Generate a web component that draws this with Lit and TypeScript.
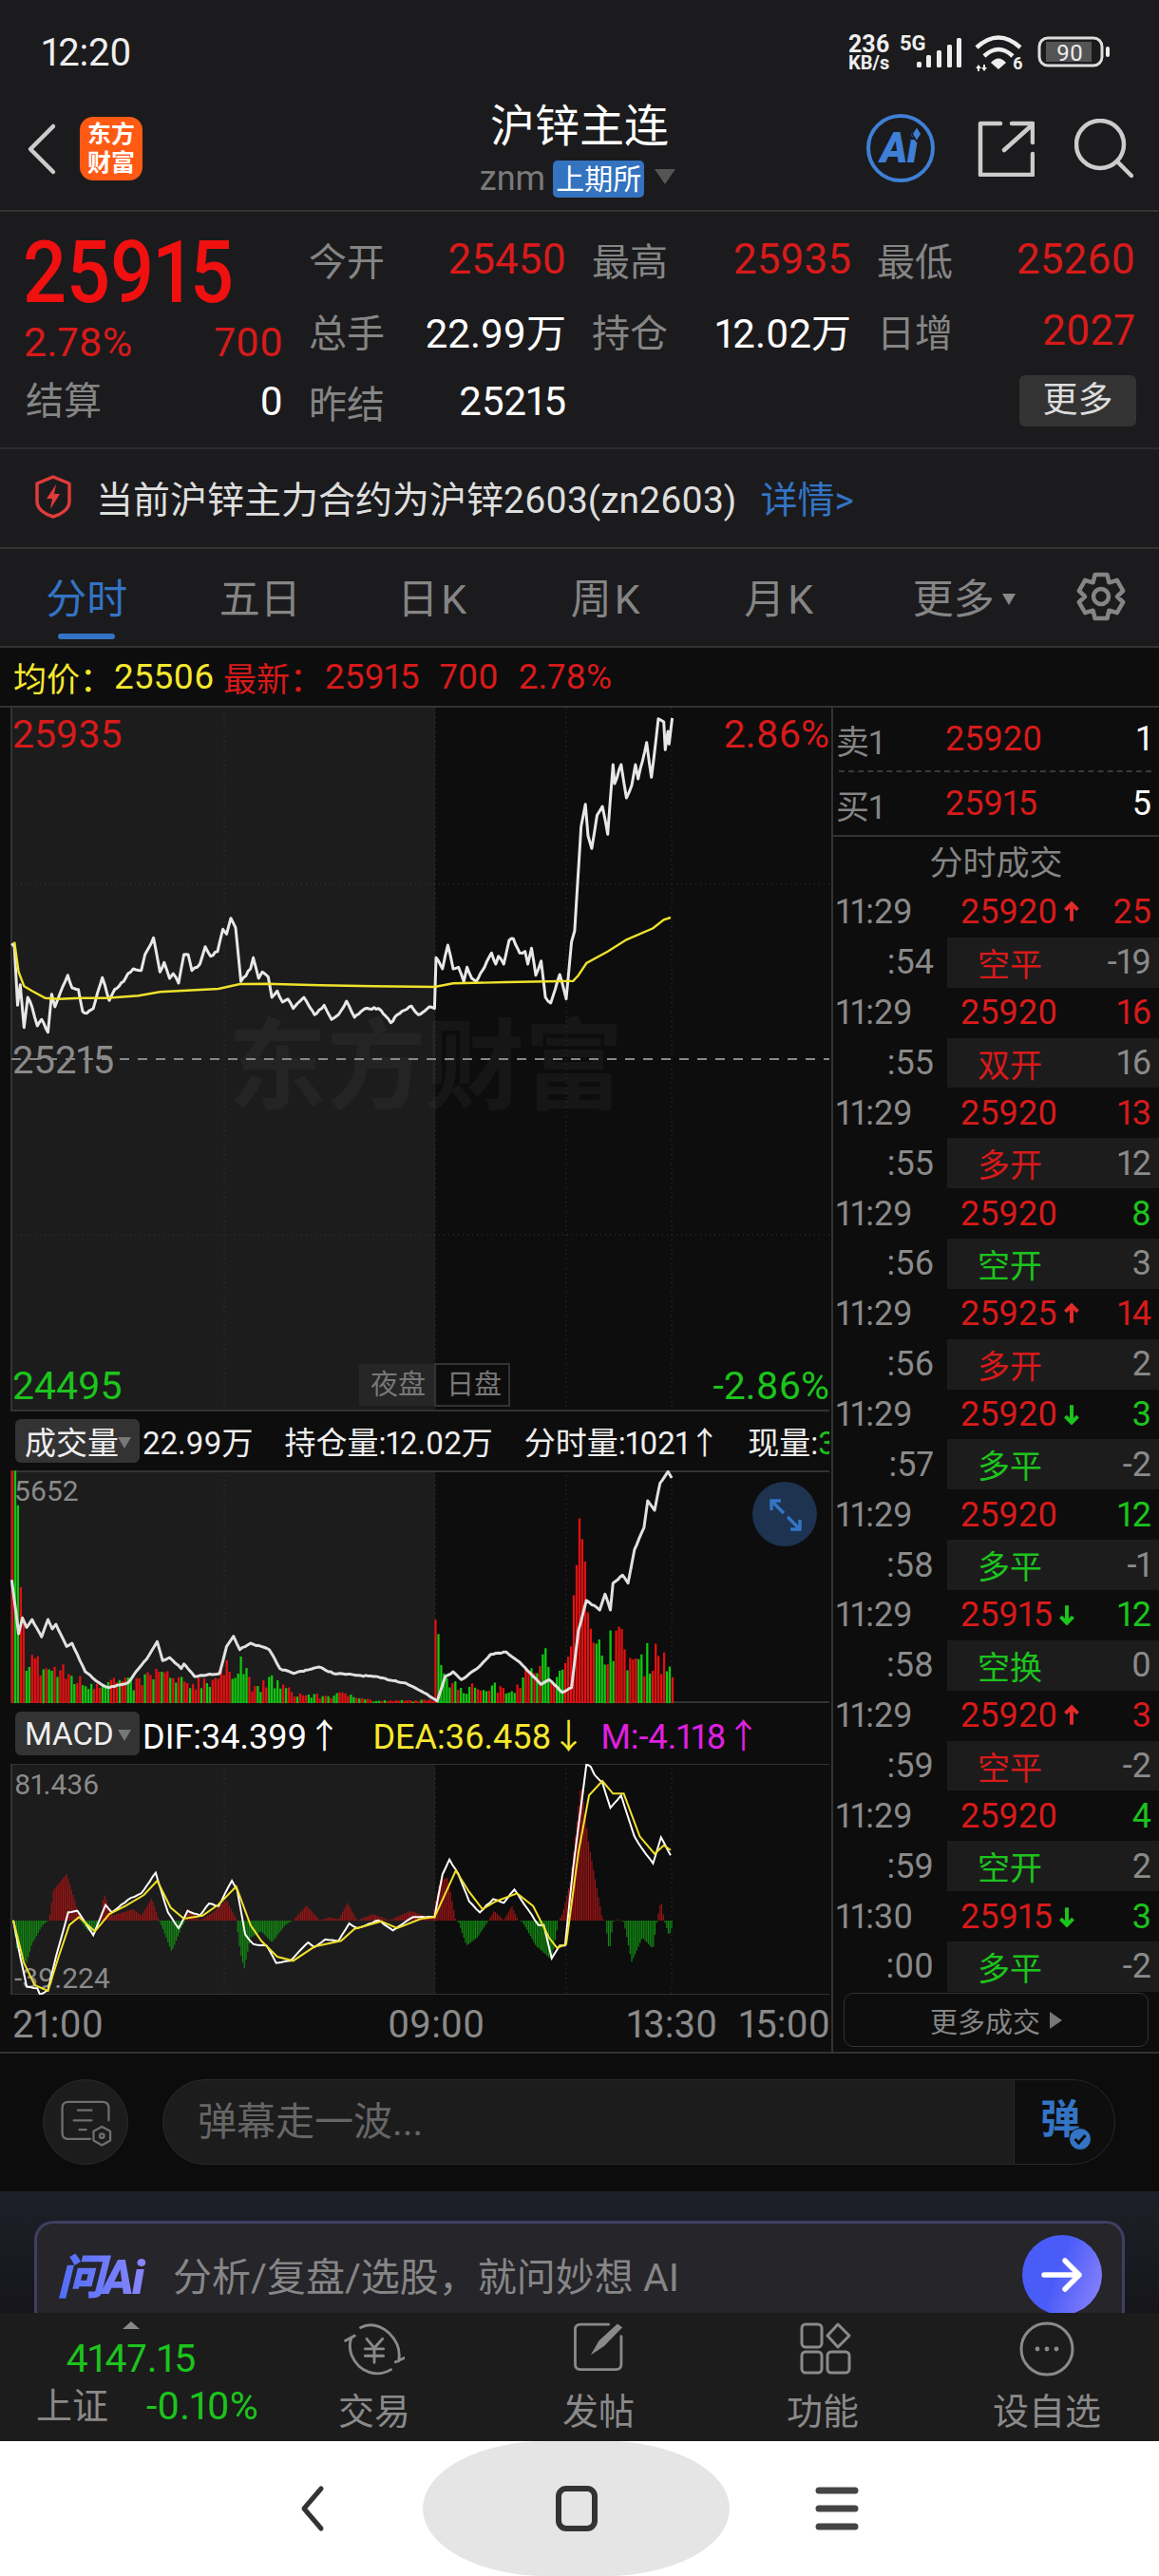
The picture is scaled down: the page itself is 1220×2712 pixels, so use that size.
import { LitElement, html, css, svg } from "lit";
import { customElement } from "lit/decorators.js";

type P = [number, number];
const XS = 1.782;
let seed = 7;
const rnd = () => {
  seed = (seed * 16807) % 2147483647;
  return seed / 2147483647;
};
const pairs = (s: string): P[] =>
  s.trim().split(/\s+/).map((t) => t.split(",").map(Number) as P);

const mapPts = (pts: P[], y0: number): P[] => pts.map(([x, y]) => [x / XS, y0 + y / 3]);
const jitter = (pts: P[], step: number, amp: number): P[] => {
  const out: P[] = [];
  for (let i = 0; i < pts.length - 1; i++) {
    const [a, b] = pts[i];
    const [c, d] = pts[i + 1];
    const n = Math.max(1, Math.floor((c - a) / step));
    for (let k = 0; k < n; k++) {
      const t = k / n;
      out.push([a + (c - a) * t, b + (d - b) * t + (k ? (rnd() - 0.5) * amp : 0)]);
    }
  }
  out.push(pts[pts.length - 1]);
  return out;
};
const line = (pts: P[]) => pts.map(([x, y]) => `${x.toFixed(1)},${y.toFixed(1)}`).join(" ");
const interp = (pts: P[], x: number) => {
  if (x <= pts[0][0]) return pts[0][1];
  for (let i = 0; i < pts.length - 1; i++) {
    if (x <= pts[i + 1][0]) {
      const t = (x - pts[i][0]) / (pts[i + 1][0] - pts[i][0]);
      return pts[i][1] + (pts[i + 1][1] - pts[i][1]) * t;
    }
  }
  return pts[pts.length - 1][1];
};

const priceRaw = pairs(`22,760 27,770 33,955 38,890 45,1025 52,930 60,960 70,1020 78,1000 90,1040 97,920 103,960 118,895 127,860 135,900 147,905 155,975 163,980 175,965 183,915 192,868 205,940 215,905 232,880 240,855 250,840 265,845 272,795 288,742 300,850 308,820 318,870 325,855 335,885 345,795 353,795 360,845 375,825 385,770 395,800 408,785 418,715 425,730 433,680 442,710 452,880 470,840 475,805 485,870 492,850 503,865 510,930 520,910 530,945 540,935 550,965 570,930 590,985 608,955 622,1000 635,985 650,942 665,993 685,965 710,965 733,1010 745,985 772,958 785,985 805,960 815,965 818,805 830,840 840,765 850,840 860,835 870,880 876,835 885,870 893,880 905,845 922,790 930,825 935,800 945,825 955,750 963,745 975,790 985,785 990,825 997,775 1005,860 1015,815 1023,930 1033,948 1050,858 1062,935 1072,755 1078,720 1090,390 1098,320 1103,420 1110,460 1120,355 1130,327 1140,415 1150,195 1153,255 1165,195 1175,300 1185,260 1192,195 1197,240 1213,125 1222,235 1235,50 1245,60 1248,148 1253,90 1255,130 1261,48`);
const avgRaw = pairs(`27,755 35,850 45,895 60,910 85,932 110,935 150,932 200,932 260,925 300,913 410,903 450,888 500,887 600,892 700,895 815,897 850,886 950,882 1075,878 1085,860 1100,822 1140,785 1175,748 1225,712 1245,685 1258,678`);
const volLineRaw = pairs(`22,670 35,840 42,790 50,820 60,795 78,850 90,795 98,825 105,810 125,880 135,870 160,960 190,1000 205,1010 240,995 260,950 275,920 295,865 305,925 318,915 340,950 345,935 365,975 412,965 425,880 438,848 450,890 470,870 505,890 525,950 550,965 598,945 625,965 700,975 760,995 800,1030 820,1052 835,975 850,960 865,985 895,950 920,905 950,898 975,930 1015,1000 1030,985 1055,1025 1072,1010 1085,830 1100,735 1125,765 1135,715 1145,765 1150,680 1168,655 1178,680 1190,575 1208,505 1215,420 1228,450 1238,365 1253,328 1260,348`);
const volEnv = pairs(`22,325 30,325 36,500 40,700 50,850 60,860 70,900 100,920 130,940 160,980 195,960 250,980 295,930 345,980 415,945 450,870 460,920 480,1010 510,960 550,1020 600,1030 660,1020 700,1050 800,1048 815,1045 818,680 825,870 840,940 860,1000 920,990 960,1000 1005,910 1022,855 1040,990 1065,870 1080,670 1087,475 1097,600 1105,780 1120,860 1150,765 1170,830 1200,900 1232,825 1245,885 1260,925`);
const difRaw = pairs(`25,665 38,780 50,875 70,880 75,900 90,885 105,780 128,640 145,635 175,712 198,617 210,640 240,600 265,580 292,515 315,640 335,690 352,635 375,650 392,612 410,620 435,540 445,570 460,710 475,740 500,745 518,800 545,793 578,735 590,750 610,725 635,730 655,675 670,690 710,665 737,697 775,655 815,655 830,520 843,473 860,520 880,605 900,640 925,598 945,610 965,568 990,630 1010,680 1020,680 1035,785 1050,745 1060,745 1075,500 1100,172 1108,180 1115,205 1130,230 1145,310 1165,270 1190,400 1205,440 1225,485 1240,403 1258,460`);
const deaRaw = pairs(`25,665 45,800 65,870 90,888 110,780 130,680 148,655 178,700 205,645 235,620 270,585 295,540 320,625 345,660 380,650 410,615 443,558 470,680 490,730 520,780 550,793 590,748 640,730 665,692 715,668 745,690 790,660 815,655 855,508 880,575 905,630 930,605 970,580 1000,620 1030,720 1045,752 1062,740 1085,450 1105,270 1130,225 1150,265 1170,265 1200,400 1228,455 1245,428 1258,443`);
const histEnv = pairs(`25,665 30,750 50,800 60,740 80,680 92,665 100,570 125,518 140,600 150,665 165,700 180,700 188,665 195,580 210,650 250,630 265,650 285,595 298,665 305,690 322,765 340,690 350,660 355,630 375,665 400,640 425,600 443,660 450,760 458,820 470,720 490,700 510,735 535,680 550,665 575,618 600,665 620,655 635,662 652,610 670,665 700,645 730,665 770,635 810,660 825,540 840,530 855,665 860,670 875,745 895,720 915,670 927,635 945,665 960,620 972,665 980,670 1005,745 1035,790 1048,665 1055,645 1070,540 1090,230 1105,430 1130,660 1135,665 1143,768 1150,670 1160,662 1170,670 1185,797 1205,720 1225,755 1232,670 1240,600 1246,665 1255,715 1260,690`);

const pricePts = line(jitter(mapPts(priceRaw, 740), 2.2, 2.2));
const avgPts = line(mapPts(avgRaw, 740));
const volLinePts = line(jitter(mapPts(volLineRaw, 1440), 2.5, 1.2));
const difPts = line(jitter(mapPts(difRaw, 1800), 3, 1));
const deaPts = line(mapPts(deaRaw, 1800));

const buildVol = () => {
  let red = "";
  let green = "";
  const base = 1793;
  for (let x = 13; x <= 708; x += 2.97) {
    const zx = x * XS;
    const envTop = 1440 + interp(volEnv, zx) / 3;
    const full = base - envTop;
    const spike = zx < 36 || (zx > 812 && zx < 822) || (zx > 1076 && zx < 1100);
    const h = full * (spike ? 1 : 0.45 + 0.55 * rnd());
    let isRed = rnd() > 0.42;
    if (zx < 34) isRed = zx < 28;
    if (zx > 28 && zx < 36) isRed = false;
    if (zx > 812 && zx < 822) isRed = true;
    if (zx > 1060 && zx < 1100) isRed = true;
    if (zx > 440 && zx < 456) isRed = false;
    if (zx > 500 && zx < 520) isRed = false;
    if (zx > 1015 && zx < 1030) isRed = false;
    const seg = `M${x.toFixed(1)} ${base}V${(base - h).toFixed(1)}`;
    if (isRed) red += seg;
    else green += seg;
  }
  return { red, green };
};
const buildHist = () => {
  let red = "";
  let green = "";
  const zero = 2022;
  for (let x = 14; x <= 707; x += 1.75) {
    const y = 1800 + interp(histEnv, x * XS) / 3;
    const seg = `M${x.toFixed(1)} ${zero}V${y.toFixed(1)}`;
    if (y < zero) red += seg;
    else green += seg;
  }
  return { red, green };
};
const vol = buildVol();
const hist = buildHist();

const gearPath = (() => {
  const cx = 26, cy = 26;
  const teeth = 6;
  const pts: string[] = [];
  for (let i = 0; i < teeth; i++) {
    const a = (i * 2 * Math.PI) / teeth - Math.PI / 2;
    const w = 0.27;
    const seq: [number, number][] = [
      [17, a - 0.52 + 0.0],
      [24, a - w],
      [24, a + w],
      [17, a + 0.52],
    ];
    seq.forEach(([r, t]) => pts.push(`${(cx + r * Math.cos(t)).toFixed(1)} ${(cy + r * Math.sin(t)).toFixed(1)}`));
  }
  return "M" + pts.join("L") + "Z";
})();

type Trade = { t: string; p: string; a: "" | "u" | "d"; v: string; vc: string; s: string; l: string; lc: string; d: string };
const T = (t: string, p: string, a: "" | "u" | "d", v: string, vc: string, s: string, l: string, lc: string, d: string): Trade => ({ t, p, a, v, vc, s, l, lc, d });
const trades: Trade[] = [
  T("11:29", "25920", "u", "25", "r", ":54", "空平", "r", "-19"),
  T("11:29", "25920", "", "16", "r", ":55", "双开", "r", "16"),
  T("11:29", "25920", "", "13", "r", ":55", "多开", "r", "12"),
  T("11:29", "25920", "", "8", "g", ":56", "空开", "g", "3"),
  T("11:29", "25925", "u", "14", "r", ":56", "多开", "r", "2"),
  T("11:29", "25920", "d", "3", "g", ":57", "多平", "g", "-2"),
  T("11:29", "25920", "", "12", "g", ":58", "多平", "g", "-1"),
  T("11:29", "25915", "d", "12", "g", ":58", "空换", "g", "0"),
  T("11:29", "25920", "u", "3", "r", ":59", "空平", "r", "-2"),
  T("11:29", "25920", "", "4", "g", ":59", "空开", "g", "2"),
  T("11:30", "25915", "d", "3", "g", ":00", "多平", "g", "-2"),
];

const arrow = (dir: "u" | "d") =>
  dir === "u"
    ? html`<svg class="mini" viewBox="0 0 16 22"><path class="ar-r" d="M8 20V3M2 9l6-6 6 6"/></svg>`
    : html`<svg class="mini" viewBox="0 0 16 22"><path class="ar-g" d="M8 2v17M2 13l6 6 6-6"/></svg>`;

@customElement("app-root")
export class AppRoot extends LitElement {
  static styles = css`
    :host { display: block; width: 1220px; height: 2712px; background: #1b1b1d; overflow: hidden;
      font-family: Roboto, "Noto Sans CJK SC", sans-serif; color: #fff; font-variant-numeric: proportional-nums; }
    .page { display: flex; flex-direction: column; height: 2712px; }
    .r { color: #d81a1a; } .g { color: #1cc41c; } .w { color: #fff; } .gy { color: #8a8a8a; } .y { color: #f5e82e; } .m { color: #e020e0; }

    .status { height: 100px; display: flex; align-items: center; justify-content: space-between; flex: none; }
    .time { font-size: 40px; margin-left: 44px; margin-top: 10px; color: #eee; letter-spacing: -0.2px; }
    .st-svg { width: 300px; height: 50px; margin-right: 40px; margin-top: 10px; display: block; }
    .st-t { fill: #eee; font-weight: 700; }
    .bar { fill: #eee; }
    .wf { fill: none; stroke: #eee; stroke-width: 4.5; }
    .wff { fill: #eee; }
    .bat { fill: none; stroke: #ddd; stroke-width: 3; }
    .batf { fill: #555; }
    .batn { fill: #eee; font-size: 24px; text-anchor: middle; }

    .nav { height: 121px; flex: none; display: grid; grid-template-columns: 1fr auto 1fr; border-bottom: 2px solid #333; box-sizing: content-box; }
    .nav-l { display: flex; align-items: center; gap: 24px; padding-left: 26px; padding-bottom: 8px; }
    .back { width: 34px; height: 56px; }
    .stk { fill: none; stroke: #ccc; stroke-width: 4.5; stroke-linecap: round; stroke-linejoin: round; }
    .logo { width: 66px; height: 67px; background: #ff5a14; border-radius: 14px; display: flex; flex-direction: column; align-items: center; justify-content: center; font-size: 25px; line-height: 30px; color: #fff; font-weight: 700; }
    .nav-c { display: flex; flex-direction: column; align-items: center; padding-top: 5px; }
    .title { font-size: 47px; line-height: 56px; color: #fff; }
    .sub { display: flex; align-items: center; margin-top: 7px; height: 40px; }
    .znm { font-size: 36px; color: #7a7a7a; margin-right: 8px; margin-left: -4px; }
    .badge { background: #3373c0; border-radius: 5px; height: 39px; width: 96px; font-size: 30px; line-height: 39px; text-align: center; color: #fff; }
    .tri-d { width: 0; height: 0; border-left: 11px solid transparent; border-right: 11px solid transparent; border-top: 16px solid #555; margin-left: 11px; margin-top: -4px; }
    .nav-r { display: flex; justify-content: flex-end; align-items: center; padding-right: 27px; padding-bottom: 10px; gap: 42px; }
    .ai-i { width: 74px; height: 74px; margin-right: 2px; }
    .ai-c { fill: none; stroke: #3f7fd6; stroke-width: 4; }
    .ai-t { fill: #3f7fd6; font-size: 44px; font-weight: 900; font-style: italic; text-anchor: middle; letter-spacing: -1px; }
    .ai-s { fill: #3f7fd6; stroke: #1b1b1d; stroke-width: 1.5; }
    .sh-i { width: 60px; height: 60px; }
    .se-i { width: 62px; height: 62px; }

    .quote { height: 248px; flex: none; display: grid; grid-template-columns: 325px 298px 300px 272px; border-bottom: 2px solid #2c2c2e; box-sizing: content-box; }
    .q-left { display: flex; flex-direction: column; padding: 30px 27px 0 27px; box-sizing: border-box; }
    .big { font-size: 90px; font-weight: 500; line-height: 70px; color: #f01010; height: 70px; margin-left: -3px; transform: scaleX(0.9); transform-origin: left center; white-space: nowrap; }
    .q-sub { display: flex; justify-content: space-between; height: 70px; margin-top: 2px; line-height: 70px; font-size: 43px; margin-left: -2px; }
    .q-row { display: flex; justify-content: space-between; height: 56px; line-height: 56px; align-items: center; }
    .cell { display: flex; justify-content: space-between; align-items: center; height: 75px; padding-right: 27px; box-sizing: border-box; }
    .cell.last { padding-right: 0; }
    .q-grid { grid-column: 2 / 5; display: grid; grid-template-columns: 298px 300px 272px; grid-auto-rows: 75px; padding-top: 12px; }
    .lb { font-size: 40px; color: #858585; }
    .val { font-size: 44px; letter-spacing: 0; }
    .val.tight { font-size: 42px; }
    .more { width: 123px; height: 54px; background: #333; border-radius: 6px; font-size: 37px; line-height: 54px; text-align: center; color: #ddd; margin-left: 150px; margin-top: 10px; }

    .notice { flex: none; display: flex; align-items: center; border-bottom: 2px solid #333; padding-left: 36px; padding-bottom: 4px; box-sizing: border-box; height: 105px; }
    .shield { width: 40px; height: 46px; margin-right: 25px; }
    .sh-s { fill: none; stroke: #e23b3b; stroke-width: 3.5; stroke-linejoin: round; }
    .sh-f { fill: #e23b3b; }
    .n-txt { font-size: 39px; color: #dedede; }
    .n-link { font-size: 39px; color: #3374c4; margin-left: 25px; }

    .tabs { height: 102px; flex: none; display: grid; grid-template-columns: repeat(6, 182.5px) 1fr; border-bottom: 2px solid #333; background: #1b1b1d; box-sizing: content-box; }
    .tab { display: flex; flex-direction: column; align-items: center; padding-top: 27px; font-size: 43px; line-height: 52px; color: #858585; }
    .tab.on { color: #3374c4; }
    .tab-k { letter-spacing: 3px; }
    .ul { width: 60px; height: 6px; background: #3374c4; border-radius: 3px; margin-top: 10px; }
    .tab-m { display: flex; align-items: center; }
    .tri-s { width: 0; height: 0; border-left: 7px solid transparent; border-right: 7px solid transparent; border-top: 12px solid #888; margin-left: 8px; margin-right: -22px; }
    .gear-c { display: flex; justify-content: flex-end; padding: 24px 35px 0 0; }
    .gear { width: 52px; height: 52px; }
    .gear-s { fill: none; stroke: #858585; stroke-width: 4.5; stroke-linejoin: round; }

    .info { height: 61px; flex: none; background: #0d0d0d; border-bottom: 2px solid #333; display: flex; align-items: center; padding-left: 14px; font-size: 37px; box-sizing: content-box; white-space: pre; }
    .lab1 { width: 106px; font-size: 35px; flex: none; }
    .lab2 { width: 107px; font-size: 35px; flex: none; }
    .sp { width: 10px; flex: none; }
    .sp2 { width: 21px; flex: none; }

    .main { flex: none; height: 1415px; display: flex; background: #0d0d0d; border-bottom: 2px solid #333; box-sizing: content-box; }
    .left { width: 875px; flex: none; display: flex; flex-direction: column; }
    .c-svg { display: block; width: 875px; flex: none; }
    .head { height: 62px; flex: none; display: flex; align-items: center; font-size: 33px; white-space: nowrap; overflow: hidden; width: 873px; }
    .head.mh { height: 64px; }
    .sel { width: 131px; height: 46px; background: #333; border-radius: 6px; margin-left: 16px; display: flex; align-items: center; padding-left: 10px; box-sizing: border-box; font-size: 33px; color: #eee; margin-right: 3px; flex: none; position: relative; }
    .tri-e { position: absolute; right: 9px; top: 19px; width: 0; height: 0; border-left: 7px solid transparent; border-right: 7px solid transparent; border-top: 12px solid #777; }
    .h-i { margin-right: 33px; color: #eee; flex: none; }
    .h-i.n3 { margin-right: 29px; }
    .hm { font-size: 36px; margin-right: 33px; flex: none; }
    .hm.y { margin-right: 16px; }
    .axis { height: 60px; flex: none; display: flex; align-items: center; font-size: 40px; color: #8a8a8a; padding: 2px 3px 0 13px; width: 873px; box-sizing: border-box; }
    .ax-1 { width: 395px; flex: none; } .ax-2 { width: 252px; flex: none; } .ax-3 { width: 118px; flex: none; }
    .ax-4 { flex: none; }

    .grid { stroke: #3a3a3a; stroke-width: 1; stroke-dasharray: 1 4; }
    .frame { stroke: #333; stroke-width: 2; }
    .zero { stroke: #888; stroke-width: 2; stroke-dasharray: 10 9; }
    .pl { fill: none; stroke: #e8e8e8; stroke-width: 3; stroke-linejoin: round; }
    .al { fill: none; stroke: #efe22c; stroke-width: 2.4; }
    .vl { fill: none; stroke: #e0e0e0; stroke-width: 3; stroke-linejoin: round; }
    .dif { fill: none; stroke: #fff; stroke-width: 2; }
    .dea { fill: none; stroke: #f1e02a; stroke-width: 2; }
    .vr { stroke: #e41010; stroke-width: 2.3; fill: none; }
    .vg { stroke: #10c810; stroke-width: 2.3; fill: none; }
    .hr { stroke: #9a1414; stroke-width: 1.2; fill: none; }
    .hg { stroke: #128a12; stroke-width: 1.2; fill: none; }
    .bgn { fill: #1c1c1c; } .bgd { fill: #0d0d0d; }
    .wm { fill: rgba(255,255,255,0.04); font-size: 104px; font-weight: 700; }
    .tr { fill: #d81a1a; font-size: 41px; }
    .tg { fill: #1cc41c; font-size: 41px; }
    .tgy { fill: #8a8a8a; font-size: 40px; }
    .ts { fill: #8a8a8a; font-size: 30px; }
    .end { text-anchor: end; }
    .sw-a { fill: #262626; } .sw-b { fill: #0d0d0d; stroke: #333; stroke-width: 2; }
    .sw-t { fill: #777; font-size: 29px; }
    .ex-c { fill: #1d3350; }
    .ex-a { fill: none; stroke: #3374c4; stroke-width: 3.5; }

    .right { flex: 1; border-left: 2px solid #333; display: flex; flex-direction: column; font-size: 36px; min-width: 0; }
    .bs { height: 66px; flex: none; display: grid; grid-template-columns: 115px 1fr auto; align-items: center; padding: 0 8px 0 3px; }
    .bs-l { color: #858585; font-size: 35px; }
    .dash { margin: 0 8px 0 6px; height: 0; border-top: 2px dashed #3a3a3a; flex: none; }
    .bs-title { height: 55px; flex: none; border-top: 2px solid #333; font-size: 35px; color: #858585; text-align: center; line-height: 58px; box-sizing: border-box; }
    .rows { height: 1163px; flex: none; display: flex; flex-direction: column; }
    .row { flex: 1; display: grid; grid-template-columns: 120px 1fr; align-items: stretch; min-height: 0; }
    .cl-t { color: #8a8a8a; display: flex; align-items: center; padding-left: 3px; }
    .cl-t.e { justify-content: flex-end; padding: 0 14px 0 0; }
    .cl-r { display: flex; align-items: center; justify-content: space-between; padding: 0 8px 0 14px; min-width: 0; }
    .cl-r.alt { background: #1c1c1c; padding-left: 32px; font-size: 34px; }
    .cl-r .n { color: #8a8a8a; font-size: 36px; }
    .px { display: flex; align-items: center; gap: 6px; }
    .mini { width: 18px; height: 24px; }
    .ar-r { fill: none; stroke: #e52a2a; stroke-width: 3.6; }
    .ar-g { fill: none; stroke: #1cc41c; stroke-width: 3.6; }
    .mb-w { flex: 1; display: flex; align-items: flex-start; justify-content: center; padding-top: 1px; }
    .mb { width: 321px; height: 57px; border: 1px solid #333; border-radius: 10px; box-sizing: border-box; display: flex; align-items: center; justify-content: center; font-size: 29px; color: #858585; }
    .tri-r { width: 0; height: 0; border-top: 9px solid transparent; border-bottom: 9px solid transparent; border-left: 13px solid #777; margin-left: 10px; }

    .dm { height: 145px; flex: none; background: #0c0c0c; display: flex; align-items: center; padding-left: 45px; gap: 36px; padding-bottom: 2px; box-sizing: border-box; }
    .dm-b { width: 90px; height: 90px; border-radius: 50%; background: #1c1c1c; border: 1px solid #2a2a2a; box-sizing: border-box; display: flex; align-items: center; justify-content: center; flex: none; }
    .dm-i { width: 88px; height: 88px; }
    .dm-s { fill: none; stroke: #6f6f6f; stroke-width: 7; stroke-linejoin: round; stroke-linecap: round; }
    .dm-f { width: 1003px; height: 90px; border-radius: 45px; background: #1c1c1c; border: 1px solid #2a2a2a; box-sizing: border-box; display: flex; overflow: hidden; flex: none; }
    .dm-p { flex: 1; font-size: 41px; color: #666; line-height: 88px; padding-left: 36px; }
    .dm-k { width: 105px; background: #0e0e0e; border-left: 1px solid #2a2a2a; position: relative; }
    .dm-z { font-size: 42px; font-weight: 700; color: #3374c4; position: absolute; left: 27px; top: 18px; line-height: 48px; }
    .dm-c { position: absolute; left: 57px; top: 50px; width: 24px; height: 24px; }
    .ck-b { fill: #3374c4; stroke: #0e0e0e; stroke-width: 1; }
    .ck-s { fill: none; stroke: #0e0e0e; stroke-width: 3; }

    .ask { height: 128px; flex: none; background: linear-gradient(#1f1f29, #15151b); padding: 31px 36px 0; overflow: hidden; box-sizing: border-box; }
    .card { height: 140px; background: #25252a; border: 3px solid #3f3f63; border-bottom: 0; border-radius: 20px; box-sizing: border-box; display: flex; align-items: flex-start; padding: 12px 21px 0 21px; }
    .wen { font-size: 50px; font-weight: 900; font-style: italic; background: linear-gradient(90deg, #4f6ef7, #9a8cff); -webkit-background-clip: text; background-clip: text; color: transparent; margin-top: 17px; line-height: 56px; width: 122px; flex: none; letter-spacing: -2px; white-space: nowrap; }
    .ask-t { flex: 1; font-size: 41px; color: #868686; line-height: 56px; margin-top: 17px; }
    .go { width: 84px; height: 84px; border-radius: 50%; background: linear-gradient(110deg, #4a5cf8 45%, #8f85fb); display: flex; align-items: center; justify-content: center; flex: none; }
    .go-i { width: 44px; height: 36px; }
    .go-s { fill: none; stroke: #fff; stroke-width: 5.5; stroke-linecap: round; stroke-linejoin: round; }

    .btm { height: 135px; flex: none; background: #1c1c1c; display: grid; grid-template-columns: 276px repeat(4, 236px); }
    .idx { display: flex; flex-direction: column; padding-top: 9px; align-items: center; }
    .idx-tri { width: 0; height: 0; border-left: 9px solid transparent; border-right: 9px solid transparent; border-bottom: 8px solid #888; }
    .idx-v { font-size: 41px; color: #1cc41c; line-height: 44px; margin-top: 9px; }
    .idx-r { display: flex; align-self: flex-start; margin-left: 38px; gap: 40px; line-height: 46px; margin-top: 5px; font-size: 38px; color: #8a8a8a; }
    .idx-r .g { font-size: 41px; }
    .bt { display: flex; flex-direction: column; align-items: center; padding-top: 9px; }
    .bt-i { width: 64px; height: 60px; }
    .bt-s { fill: none; stroke: #8a8a8a; stroke-width: 3; stroke-linecap: round; stroke-linejoin: round; }
    .bt-sz { stroke-width: 9; }
    .bt-f { fill: #8a8a8a; }
    .bt-l { font-size: 38px; color: #8a8a8a; line-height: 46px; margin-top: 12px; }

    .sys { height: 142px; flex: none; background: #fff; display: flex; align-items: center; padding-left: 304px; box-sizing: border-box; }
    .pill { width: 323px; height: 142px; background: #e5e5e5; border-radius: 50% / 62%; display: flex; align-items: center; justify-content: center; margin: 0 90px 0 95px; }
    .sys-i { width: 46px; height: 50px; flex: none; }
    .sys-s { fill: none; stroke: #333; stroke-width: 6; stroke-linecap: round; stroke-linejoin: round; }
    .sys-b { fill: none; stroke: #333; stroke-width: 5; stroke-linecap: round; stroke-linejoin: round; }
    .sys-l { fill: none; stroke: #444; stroke-width: 7; stroke-linecap: round; }
  `;

  private chartMain() {
    return html`<svg class="c-svg" height="741" viewBox="0 745 875 741">
      ${svg`
      <rect class="bgd" x="0" y="745" width="875" height="741"/>
      <rect class="bgn" x="12" y="745" width="446" height="741"/>
      <text class="wm" x="240" y="1160">东方财富</text>
      <line class="grid" x1="236" x2="236" y1="745" y2="1484"/>
      <line class="grid" x1="458" x2="458" y1="745" y2="1484"/>
      <line class="grid" x1="596" x2="596" y1="745" y2="1484"/>
      <line class="grid" x1="707" x2="707" y1="745" y2="1484"/>
      <line class="grid" x1="12" x2="873" y1="931" y2="931"/>
      <line class="grid" x1="12" x2="873" y1="1300" y2="1300"/>
      <line class="frame" x1="12" x2="12" y1="745" y2="1486"/>
      <line class="frame" x1="12" x2="873" y1="1485" y2="1485"/>
      <text class="tgy" x="13" y="1130">25215</text>
      <line class="zero" x1="12" x2="873" y1="1115" y2="1115"/>
      <polyline class="pl" points=${pricePts}/>
      <polyline class="al" points=${avgPts}/>
      <text class="tr" x="13" y="787">25935</text>
      <text class="tr end" x="873" y="787">2.86%</text>
      <text class="tg" x="13" y="1473">24495</text>
      <text class="tg end" x="873" y="1473">-2.86%</text>
      <rect class="sw-a" x="378" y="1436" width="80" height="44"/>
      <rect class="sw-b" x="458" y="1436" width="78" height="44"/>
      <text class="sw-t" x="390" y="1468">夜盘</text>
      <text class="sw-t" x="470" y="1468">日盘</text>
      `}
    </svg>`;
  }

  private chartVol() {
    return html`<svg class="c-svg" height="245" viewBox="0 1548 875 245">
      ${svg`
      <rect class="bgn" x="12" y="1548" width="446" height="245"/>
      <line class="grid" x1="236" x2="236" y1="1548" y2="1793"/>
      <line class="grid" x1="458" x2="458" y1="1548" y2="1793"/>
      <line class="grid" x1="596" x2="596" y1="1548" y2="1793"/>
      <line class="grid" x1="707" x2="707" y1="1548" y2="1793"/>
      <line class="frame" x1="12" x2="873" y1="1549" y2="1549"/>
      <line class="frame" x1="12" x2="12" y1="1548" y2="1793"/>
      <line class="frame" x1="12" x2="873" y1="1792" y2="1792"/>
      <path class="vg" d=${vol.green}/>
      <path class="vr" d=${vol.red}/>
      <text class="ts" x="15" y="1580">5652</text>
      <polyline class="vl" points=${volLinePts}/>
      <circle class="ex-c" cx="826" cy="1594" r="34"/>
      <path class="ex-a" d="M812 1590V1580H822M812 1580L825 1593M842 1600V1610H832M842 1610L829 1597"/>
      `}
    </svg>`;
  }

  private chartMacd() {
    return html`<svg class="c-svg" height="243" viewBox="0 1857 875 243">
      ${svg`
      <rect class="bgn" x="12" y="1857" width="446" height="243"/>
      <line class="grid" x1="236" x2="236" y1="1857" y2="2100"/>
      <line class="grid" x1="458" x2="458" y1="1857" y2="2100"/>
      <line class="grid" x1="596" x2="596" y1="1857" y2="2100"/>
      <line class="grid" x1="707" x2="707" y1="1857" y2="2100"/>
      <line class="frame" x1="12" x2="873" y1="1857" y2="1857"/>
      <line class="frame" x1="12" x2="12" y1="1857" y2="2100"/>
      <line class="frame" x1="12" x2="873" y1="2100" y2="2100"/>
      <text class="ts" x="15" y="1889">81.436</text>
      <text class="ts" x="15" y="2093">-39.224</text>
      <path class="hr" d=${hist.red}/>
      <path class="hg" d=${hist.green}/>
      <polyline class="dif" points=${difPts}/>
      <polyline class="dea" points=${deaPts}/>
      `}
    </svg>`;
  }

  render() {
    return html`<div class="page">
      <div class="status">
        <div class="time">12:20</div>
        <svg class="st-svg" viewBox="880 30 300 50">
          ${svg`
          <text class="st-t" x="893" y="55" font-size="25">236</text>
          <text class="st-t" x="893" y="73" font-size="20">KB/s</text>
          <text class="st-t" x="947" y="53" font-size="22">5G</text>
          <rect class="bar" x="965" y="65" width="5" height="6" rx="1.5"/>
          <rect class="bar" x="975" y="58" width="5" height="13" rx="1.5"/>
          <rect class="bar" x="986" y="53" width="5" height="18" rx="1.5"/>
          <rect class="bar" x="997" y="47" width="5" height="24" rx="1.5"/>
          <rect class="bar" x="1007" y="40" width="5" height="31" rx="1.5"/>
          <path class="wf" d="M1028 50Q1051 29 1074 50"/>
          <path class="wf" d="M1036 59Q1051 45 1066 59"/>
          <path class="wff" d="M1043 66Q1051 57 1059 66L1051 73Z"/>
          <path class="wff" d="M1027 72l3-4 3 4h-2v3h-2v-3zM1035 68h2v3h2l-3 4-3-4h2z"/>
          <text class="st-t" x="1066" y="73" font-size="18">6</text>
          <rect class="bat" x="1094" y="40" width="66" height="29" rx="9"/>
          <rect class="batf" x="1101" y="44" width="48" height="21"/>
          <text class="batn" x="1126" y="64">90</text>
          <rect class="bar" x="1164" y="49" width="4" height="11" rx="2"/>
          `}
        </svg>
      </div>

      <div class="nav">
        <div class="nav-l">
          <svg class="back" viewBox="0 0 34 56"><path class="stk" d="M30 4L6 28l24 24" /></svg>
          <div class="logo"><span>东方</span><span>财富</span></div>
        </div>
        <div class="nav-c">
          <div class="title">沪锌主连</div>
          <div class="sub"><span class="znm">znm</span><span class="badge">上期所</span><span class="tri-d"></span></div>
        </div>
        <div class="nav-r">
          <svg class="ai-i" viewBox="0 0 74 74">
            <circle class="ai-c" cx="37" cy="37" r="34"/>
            <text class="ai-t" x="35" y="52">Ai</text>
            <path class="ai-s" d="M54 14l5 8-5 8-5-8z"/>
          </svg>
          <svg class="sh-i" viewBox="0 0 60 60"><path class="stk" d="M24 4H3V58H58V36M28 32L58 5M36 4H58V24"/></svg>
          <svg class="se-i" viewBox="0 0 62 62"><circle class="stk" cx="27" cy="27" r="25"/><path class="stk" d="M46 46L60 60"/></svg>
        </div>
      </div>

      <div class="quote">
        <div class="q-left">
          <div class="big">25915</div>
          <div class="q-sub r"><span>2.78%</span><span>700</span></div>
          <div class="q-row"><span class="lb">结算</span><span class="val tight">0</span></div>
        </div>
        <div class="q-grid">
          <div class="cell"><span class="lb">今开</span><span class="val r">25450</span></div>
          <div class="cell"><span class="lb">最高</span><span class="val r">25935</span></div>
          <div class="cell last"><span class="lb">最低</span><span class="val r">25260</span></div>
          <div class="cell"><span class="lb">总手</span><span class="val tight">22.99万</span></div>
          <div class="cell"><span class="lb">持仓</span><span class="val tight">12.02万</span></div>
          <div class="cell last"><span class="lb">日增</span><span class="val r">2027</span></div>
          <div class="cell"><span class="lb">昨结</span><span class="val tight">25215</span></div>
          <div></div>
          <div><div class="more">更多</div></div>
        </div>
      </div>

      <div class="notice">
        <svg class="shield" viewBox="0 0 40 46">
          <path class="sh-s" d="M20 2L37 9V28C37 36 28 42 20 44C12 42 3 36 3 28V9Z"/>
          <path class="sh-f" d="M23 10L13 25H19L17 36L27 20H21Z"/>
        </svg>
        <span class="n-txt">当前沪锌主力合约为沪锌2603(zn2603)</span>
        <span class="n-link">详情&gt;</span>
      </div>

      <div class="tabs">
        <div class="tab on"><span>分时</span><div class="ul"></div></div>
        <div class="tab"><span>五日</span></div>
        <div class="tab"><span class="tab-k">日K</span></div>
        <div class="tab"><span class="tab-k">周K</span></div>
        <div class="tab"><span class="tab-k">月K</span></div>
        <div class="tab"><span class="tab-m">更多<i class="tri-s"></i></span></div>
        <div class="gear-c">
          <svg class="gear" viewBox="0 0 52 52"><path class="gear-s" d=${gearPath}/><circle class="gear-s" cx="26" cy="26" r="8"/></svg>
        </div>
      </div>

      <div class="info"><span class="y lab1">均价&#xFF1A;</span><span class="y">25506</span><span class="sp"></span><span class="r lab2">最新&#xFF1A;</span><span class="r">25915</span><span class="sp2"></span><span class="r">700</span><span class="sp2"></span><span class="r">2.78%</span></div>

      <div class="main">
        <div class="left">
          ${this.chartMain()}
          <div class="head">
            <div class="sel">成交量<i class="tri-e"></i></div>
            <span class="h-i">22.99万</span>
            <span class="h-i">持仓量:12.02万</span>
            <span class="h-i n3">分时量:1021↑</span>
            <span class="h-i">现量:<span class="g">3</span></span>
          </div>
          ${this.chartVol()}
          <div class="head mh">
            <div class="sel">MACD<i class="tri-e"></i></div>
            <span class="hm w">DIF:34.399↑</span>
            <span class="hm y">DEA:36.458↓</span>
            <span class="hm m">M:-4.118↑</span>
          </div>
          ${this.chartMacd()}
          <div class="axis"><span class="ax-1">21:00</span><span class="ax-2">09:00</span><span class="ax-3">13:30</span><span class="ax-4">15:00</span></div>
        </div>

        <div class="right">
          <div class="bs"><span class="bs-l">卖1</span><span class="r">25920</span><span>1</span></div>
          <div class="dash"></div>
          <div class="bs"><span class="bs-l">买1</span><span class="r">25915</span><span>5</span></div>
          <div class="bs-title">分时成交</div>
          <div class="rows">
            ${trades.map(
              (t) => html`
                <div class="row">
                  <div class="cl-t">${t.t}</div>
                  <div class="cl-r">
                    <span class="px r">${t.p}${t.a ? arrow(t.a) : ""}</span>
                    <span class=${t.vc}>${t.v}</span>
                  </div>
                </div>
                <div class="row">
                  <div class="cl-t e">${t.s}</div>
                  <div class="cl-r alt">
                    <span class=${t.lc}>${t.l}</span>
                    <span class="n">${t.d}</span>
                  </div>
                </div>
              `
            )}
          </div>
          <div class="mb-w"><div class="mb">更多成交<i class="tri-r"></i></div></div>
        </div>
      </div>

      <div class="dm">
        <div class="dm-b">
          <svg class="dm-i" viewBox="135 60 270 270">
            <path class="dm-s" d="M345 190V150Q345 130 325 130H215Q195 130 195 150V230Q195 250 215 250H285M245 157H290M232 190H290M250 220H272"/>
            <path class="dm-s" d="M323 210L350 225V255L323 270L296 255V225Z"/>
            <circle class="dm-s" cx="323" cy="240" r="7"/>
          </svg>
        </div>
        <div class="dm-f">
          <div class="dm-p">弹幕走一波...</div>
          <div class="dm-k">
            <span class="dm-z">弹</span>
            <svg class="dm-c" viewBox="0 0 24 24"><circle class="ck-b" cx="12" cy="12" r="11.5"/><path class="ck-s" d="M6.5 12l4 4 7-8"/></svg>
          </div>
        </div>
      </div>

      <div class="ask">
        <div class="card">
          <div class="wen">问Ai</div>
          <div class="ask-t">分析/复盘/选股&#xFF0C;就问妙想 AI</div>
          <div class="go"><svg class="go-i" viewBox="0 0 44 36"><path class="go-s" d="M3 18H40M25 3L40 18L25 33"/></svg></div>
        </div>
      </div>

      <div class="btm">
        <div class="idx">
          <i class="idx-tri"></i>
          <div class="idx-v">4147.15</div>
          <div class="idx-r"><span>上证</span><span class="g">-0.10%</span></div>
        </div>
        <div class="bt">
          <svg class="bt-i" viewBox="60 25 200 187">
            <path class="bt-s bt-sz" d="M115 45C150 25 205 40 235 100C245 125 243 140 240 155M230 158L258 145M215 183C170 210 110 195 85 135C78 115 78 95 85 78M65 88L95 72M135 82L160 112L187 82M130 115H190M130 138H190M160 112V160"/>
          </svg>
          <div class="bt-l">交易</div>
        </div>
        <div class="bt">
          <svg class="bt-i" viewBox="768 30 206 193">
            <path class="bt-s bt-sz" d="M905 40H810Q792 40 792 58V175Q792 193 810 193H930Q948 193 948 175V80"/>
            <path class="bt-f" d="M935 38L952 50L890 114L845 143L872 96Z"/>
          </svg>
          <div class="bt-l">发帖</div>
        </div>
        <div class="bt">
          <svg class="bt-i" viewBox="0 0 64 60">
            <rect class="bt-s" x="10" y="3" width="21" height="24" rx="4"/>
            <rect class="bt-s" x="10" y="32" width="21" height="22" rx="4"/>
            <rect class="bt-s" x="37" y="32" width="23" height="22" rx="4"/>
            <path class="bt-s" d="M48 3L60 15L48 27L37 15Z"/>
          </svg>
          <div class="bt-l">功能</div>
        </div>
        <div class="bt">
          <svg class="bt-i" viewBox="0 0 64 60">
            <circle class="bt-s" cx="32" cy="29" r="27"/>
            <circle class="bt-f" cx="22" cy="29" r="2.4"/><circle class="bt-f" cx="32" cy="29" r="2.4"/><circle class="bt-f" cx="42" cy="29" r="2.4"/>
          </svg>
          <div class="bt-l">设自选</div>
        </div>
      </div>

      <div class="sys">
        <svg class="sys-i" viewBox="0 0 46 50"><path class="sys-b" d="M34 4L16 25L34 46"/></svg>
        <div class="pill"><svg class="sys-i" viewBox="0 0 46 50"><rect class="sys-s" x="4" y="4" width="38" height="42" rx="8"/></svg></div>
        <svg class="sys-i" viewBox="0 0 46 50"><path class="sys-l" d="M4 6H42M4 25H42M4 44H42"/></svg>
      </div>
    </div>`;
  }
}
